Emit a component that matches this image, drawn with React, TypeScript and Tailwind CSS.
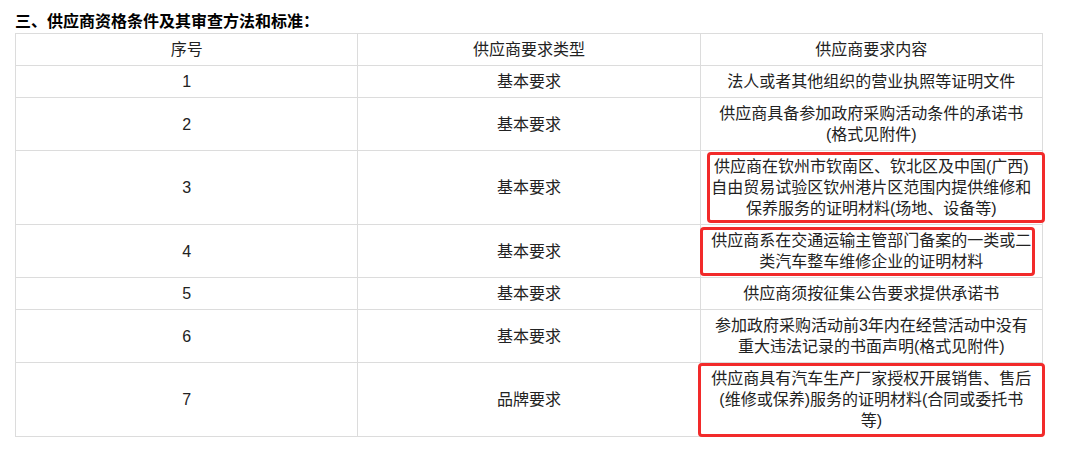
import React from "react";

const rows: { no: string; type: string; content: string[] }[] = [
  { no: "1", type: "基本要求", content: ["法人或者其他组织的营业执照等证明文件"] },
  { no: "2", type: "基本要求", content: ["供应商具备参加政府采购活动条件的承诺书", "(格式见附件)"] },
  {
    no: "3",
    type: "基本要求",
    content: [
      "供应商在钦州市钦南区、钦北区及中国(广西)",
      "自由贸易试验区钦州港片区范围内提供维修和",
      "保养服务的证明材料(场地、设备等)",
    ],
  },
  {
    no: "4",
    type: "基本要求",
    content: ["供应商系在交通运输主管部门备案的一类或二", "类汽车整车维修企业的证明材料"],
  },
  { no: "5", type: "基本要求", content: ["供应商须按征集公告要求提供承诺书"] },
  {
    no: "6",
    type: "基本要求",
    content: ["参加政府采购活动前3年内在经营活动中没有", "重大违法记录的书面声明(格式见附件)"],
  },
  {
    no: "7",
    type: "品牌要求",
    content: [
      "供应商具有汽车生产厂家授权开展销售、售后",
      "(维修或保养)服务的证明材料(合同或委托书",
      "等)",
    ],
  },
];

export default function App() {
  return (
    <div
      className="relative w-[1067px] h-[450px] bg-white text-[#222] overflow-hidden"
      style={{ fontFamily: '"Liberation Sans", "Noto Sans CJK SC", sans-serif' }}
    >
      <div className="h-[33px] pt-[11px] pl-[15px] text-[16px] leading-[22px] font-bold text-black whitespace-nowrap">
        三、供应商资格条件及其审查方法和标准：
      </div>
      <table className="ml-[15px] w-[1028px] border-collapse table-fixed text-[16px] leading-[21px]">
        <thead>
          <tr>
            <th className="border border-[#dcdcdc] px-2 py-[5px] font-normal text-center">序号</th>
            <th className="border border-[#dcdcdc] px-2 py-[5px] font-normal text-center">供应商要求类型</th>
            <th className="border border-[#dcdcdc] px-2 py-[5px] font-normal text-center">供应商要求内容</th>
          </tr>
        </thead>
        <tbody>
          {rows.map((r) => (
            <tr key={r.no}>
              <td className="border border-[#dcdcdc] px-2 py-[5px] text-center align-middle">{r.no}</td>
              <td className="border border-[#dcdcdc] px-2 py-[5px] text-center align-middle">{r.type}</td>
              <td className="border border-[#dcdcdc] px-1 py-[5px] text-center align-middle">
                {r.content.map((line, i) => (
                  <div key={i} className="whitespace-nowrap">
                    {line}
                  </div>
                ))}
              </td>
            </tr>
          ))}
        </tbody>
      </table>
      <div className="absolute left-[707px] top-[152px] w-[338px] h-[71px] border-[3px] border-[#f22a2a] rounded-[4px]" />
      <div className="absolute left-[700px] top-[227px] w-[335px] h-[49px] border-[3px] border-[#f22a2a] rounded-[4px]" />
      <div className="absolute left-[698px] top-[363px] w-[347px] h-[74px] border-[3px] border-[#f22a2a] rounded-[4px]" />
    </div>
  );
}
